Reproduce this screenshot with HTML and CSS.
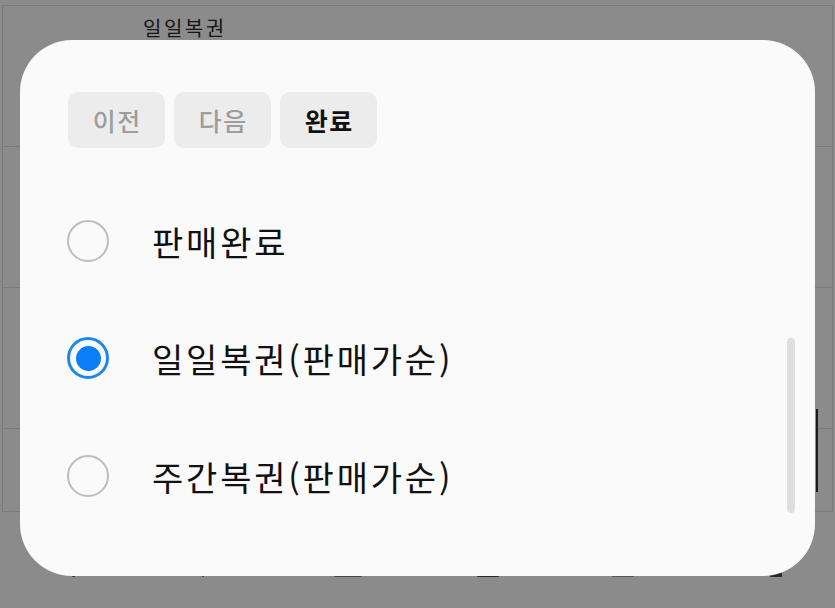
FILE: index.html
```html
<!DOCTYPE html>
<html lang="ko">
<head>
<meta charset="utf-8">
<link rel="stylesheet" href="styles.css">
</head>
<body>
<div class="page">
  <div class="table">
    <div class="row first"><span class="cell-text">일일복권</span></div>
    <div class="row"></div>
    <div class="row"></div>
    <div class="row last"><span class="edge-mark"></span></div>
  </div>
  <div class="peek">
    <span class="pk pk1"></span><span class="pk pk2"></span><span class="pk pk3"></span><span class="pk pk4"></span><span class="pk pk5"></span><span class="pk pk6"></span>
  </div>
</div>

<div class="modal">
  <div class="toolbar">
    <button class="tbtn dim">이전</button>
    <button class="tbtn dim">다음</button>
    <button class="tbtn done">완료</button>
  </div>
  <div class="list">
    <div class="option">
      <span class="radio"></span>
      <span class="label">판매완료</span>
    </div>
    <div class="option">
      <span class="radio checked"><span class="dot"></span></span>
      <span class="label">일일복권(판매가순)</span>
    </div>
    <div class="option">
      <span class="radio"></span>
      <span class="label">주간복권(판매가순)</span>
    </div>
  </div>
  <div class="scrollbar"></div>
</div>
</body>
</html>
```

FILE: styles.css
```css
html, body {
  margin: 0;
  padding: 0;
}
body {
  width: 835px;
  height: 608px;
  overflow: hidden;
  background: #8b8b8b;
  position: relative;
  font-family: "Noto Sans CJK KR", "Noto Sans", sans-serif;
}
.page {
  padding-top: 5px;
}
.table {
  margin-left: 2px;
  width: 829px;
  border: 1px solid #7a7a7a;
}
.row {
  height: 140px;
  border-bottom: 1px solid #7a7a7a;
  position: relative;
}
.row.last {
  height: 82px;
  border-bottom: none;
}
.cell-text {
  display: block;
  padding-left: 140px;
  padding-top: 10px;
  font-size: 20px;
  line-height: 24px;
  letter-spacing: 2.5px;
  color: #151515;
}
.edge-mark {
  position: absolute;
  left: 813px;
  top: -20px;
  width: 2px;
  height: 83px;
  background: #1a1a1a;
}
.peek {
  position: relative;
  height: 10px;
  margin-top: 61px;
}
.pk {
  position: absolute;
  top: 0;
  height: 4px;
  background: #2a2a2a;
  border-radius: 1px;
}
.pk1 { left: 72px; width: 3px; }
.pk2 { left: 202px; width: 2px; }
.pk3 { left: 334px; width: 28px; background: #444; }
.pk4 { left: 477px; width: 22px; }
.pk5 { left: 612px; width: 22px; background: #555; }
.pk6 { left: 770px; width: 12px; }

.modal {
  position: absolute;
  left: 20px;
  top: 40px;
  width: 795px;
  height: 536px;
  border-radius: 52px;
  background: #fafafa;
  box-sizing: border-box;
  padding: 52px 48px 0 47px;
  overflow: hidden;
}
.toolbar {
  display: flex;
  gap: 9px;
  padding-left: 1px;
}
.tbtn {
  width: 97px;
  height: 56px;
  border: none;
  border-radius: 10px;
  background: #ececec;
  font-family: "Noto Sans CJK KR", "Noto Sans", sans-serif;
  font-size: 25px;
  letter-spacing: 1.5px;
  padding: 0 0 0 1.5px;
  display: flex;
  align-items: center;
  justify-content: center;
}
.tbtn.dim {
  color: #9d9d9d;
  font-weight: 500;
}
.tbtn.done {
  color: #111111;
  font-weight: 700;
}
.list {
  margin-top: 34px;
  height: 333px;
  overflow: hidden;
}
.option {
  height: 117.5px;
  display: flex;
  align-items: center;
  gap: 43px;
}
.radio {
  width: 42px;
  height: 42px;
  box-sizing: border-box;
  border-radius: 50%;
  border: 2px solid #bcbcbc;
  display: flex;
  align-items: center;
  justify-content: center;
  flex: none;
}
.radio.checked {
  border: 3px solid #1e88e8;
}
.dot {
  width: 25px;
  height: 25px;
  border-radius: 50%;
  background: #0a7ef5;
}
.label {
  font-size: 34px;
  letter-spacing: 2.8px;
  color: #111111;
  line-height: 40px;
  padding-top: 2px;
}
.scrollbar {
  position: absolute;
  left: 767px;
  top: 298px;
  width: 8px;
  height: 175px;
  border-radius: 4px;
  background: #dedede;
}
```
